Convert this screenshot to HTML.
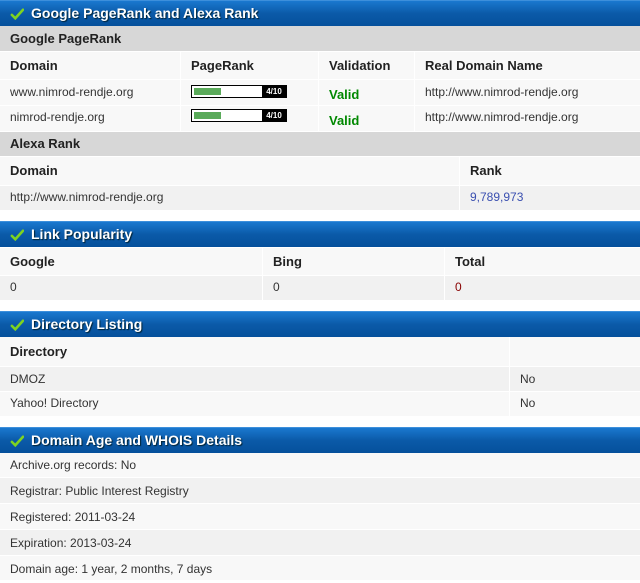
<!DOCTYPE html>
<html><head><style>
body{margin:0;width:640px;height:580px;overflow:hidden;background:#fff;font-family:"Liberation Sans",Arial,sans-serif;position:relative}
.a{position:absolute;box-sizing:border-box}
.h{left:0;width:640px;height:26px;background:linear-gradient(#1a78cf,#0b5aa8 50%,#05509c);border-top:1px solid #3d8fdb;color:#fff;font-weight:bold;font-size:14px;line-height:24px;padding-left:31px;text-shadow:1px 1px 1px #023}
.h svg{position:absolute;left:10px;top:7px}
.s{left:0;width:640px;background:#d7d7d7;font-weight:bold;font-size:13px;color:#222;padding-left:10px}
.c{background:#f8f8f8;font-size:12px;color:#333;padding-left:10px}
.b{font-weight:bold;font-size:13px;color:#222}
.d{background:#f1f1f1}
.g{color:#080;font-weight:bold;font-size:13px}
.bar{width:96px;height:13px;border:1px solid #000;background:#fff}
.bar i{position:absolute;left:2px;top:2px;width:27px;height:7px;background:#5aaa5a}
.bar u{position:absolute;right:0;top:0;width:24px;height:11px;background:#000;color:#fff;font-size:8px;line-height:11px;text-decoration:none;text-align:center;font-weight:bold}
</style></head><body>
<svg width="0" height="0" style="position:absolute"><defs><symbol id="ck" viewBox="0 0 16 14"><path d="M2 8 L6 12 L15 2" stroke="#7ed321" stroke-width="3" fill="none" stroke-linecap="round"/></symbol></defs></svg>

<div class="a h" style="top:0"><svg width="14" height="12"><use href="#ck"/></svg>Google PageRank and Alexa Rank</div>
<div class="a s" style="top:26px;height:25px;line-height:25px">Google PageRank</div>

<div class="a c b" style="top:52px;left:0;width:180px;height:27px;line-height:27px">Domain</div>
<div class="a c b" style="top:52px;left:181px;width:137px;height:27px;line-height:27px">PageRank</div>
<div class="a c b" style="top:52px;left:319px;width:95px;height:27px;line-height:27px">Validation</div>
<div class="a c b" style="top:52px;left:415px;width:225px;height:27px;line-height:27px">Real Domain Name</div>

<div class="a c" style="top:80px;left:0;width:180px;height:25px;line-height:25px">www.nimrod-rendje.org</div>
<div class="a c" style="top:80px;left:181px;width:137px;height:25px"><div class="a bar" style="left:10px;top:5px"><i></i><u>4/10</u></div></div>
<div class="a c g" style="top:80px;left:319px;width:95px;height:25px;line-height:29px">Valid</div>
<div class="a c" style="top:80px;left:415px;width:225px;height:25px;line-height:25px">http://www.nimrod-rendje.org</div>

<div class="a c" style="top:106px;left:0;width:180px;height:25px;line-height:22px">nimrod-rendje.org</div>
<div class="a c" style="top:106px;left:181px;width:137px;height:25px"><div class="a bar" style="left:10px;top:3px"><i></i><u>4/10</u></div></div>
<div class="a c g" style="top:106px;left:319px;width:95px;height:25px;line-height:29px">Valid</div>
<div class="a c" style="top:106px;left:415px;width:225px;height:25px;line-height:22px">http://www.nimrod-rendje.org</div>

<div class="a s" style="top:132px;height:24px;line-height:24px">Alexa Rank</div>
<div class="a c b" style="top:157px;left:0;width:459px;height:28px;line-height:28px">Domain</div>
<div class="a c b" style="top:157px;left:460px;width:180px;height:28px;line-height:28px">Rank</div>
<div class="a c d" style="top:186px;left:0;width:459px;height:24px;line-height:22px">http://www.nimrod-rendje.org</div>
<div class="a c d" style="top:186px;left:460px;width:180px;height:24px;line-height:22px;color:#3a4fb0">9,789,973</div>

<div class="a h" style="top:221px"><svg width="14" height="12"><use href="#ck"/></svg>Link Popularity</div>
<div class="a c b" style="top:248px;left:0;width:262px;height:27px;line-height:27px">Google</div>
<div class="a c b" style="top:248px;left:263px;width:181px;height:27px;line-height:27px">Bing</div>
<div class="a c b" style="top:248px;left:445px;width:195px;height:27px;line-height:27px">Total</div>
<div class="a c d" style="top:276px;left:0;width:262px;height:24px;line-height:22px">0</div>
<div class="a c d" style="top:276px;left:263px;width:181px;height:24px;line-height:22px">0</div>
<div class="a c d" style="top:276px;left:445px;width:195px;height:24px;line-height:22px;color:#800">0</div>

<div class="a h" style="top:311px"><svg width="14" height="12"><use href="#ck"/></svg>Directory Listing</div>
<div class="a c b" style="top:337px;left:0;width:509px;height:29px;line-height:29px">Directory</div>
<div class="a c" style="top:337px;left:510px;width:130px;height:29px"></div>
<div class="a c d" style="top:367px;left:0;width:509px;height:24px;line-height:24px">DMOZ</div>
<div class="a c d" style="top:367px;left:510px;width:130px;height:24px;line-height:24px">No</div>
<div class="a c" style="top:392px;left:0;width:509px;height:24px;line-height:22px">Yahoo! Directory</div>
<div class="a c" style="top:392px;left:510px;width:130px;height:24px;line-height:22px">No</div>

<div class="a h" style="top:427px"><svg width="14" height="12"><use href="#ck"/></svg>Domain Age and WHOIS Details</div>
<div class="a c" style="top:453px;left:0;width:640px;height:24px;line-height:24px">Archive.org records: No</div>
<div class="a c d" style="top:478px;left:0;width:640px;height:25px;line-height:27px">Registrar: Public Interest Registry</div>
<div class="a c" style="top:504px;left:0;width:640px;height:25px;line-height:27px">Registered: 2011-03-24</div>
<div class="a c d" style="top:530px;left:0;width:640px;height:25px;line-height:27px">Expiration: 2013-03-24</div>
<div class="a c" style="top:556px;left:0;width:640px;height:24px;line-height:27px">Domain age: 1 year, 2 months, 7 days</div>
</body></html>
